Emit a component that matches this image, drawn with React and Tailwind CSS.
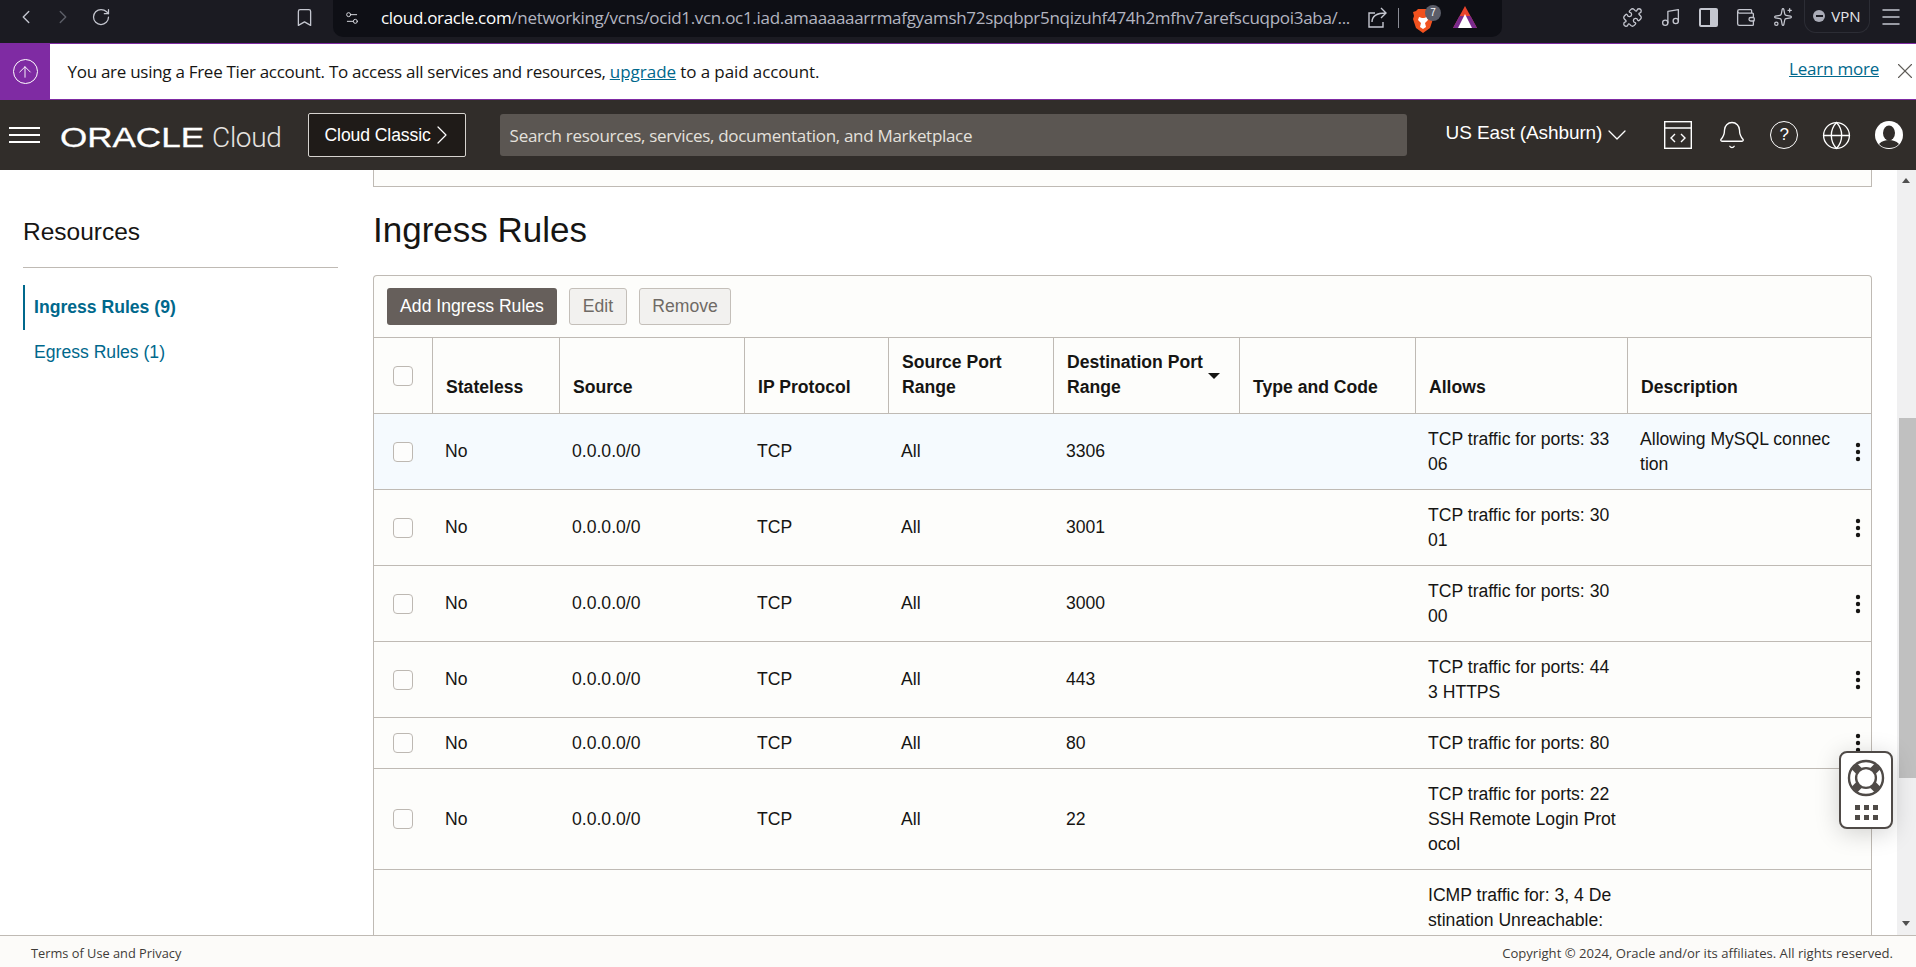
import React from "react";
import {
  ChevronLeft,
  ChevronRight,
  RotateCw,
  Bookmark,
  Settings2,
  Puzzle,
  Music,
  Wallet,
  Sparkles,
  Menu,
  ArrowUp,
  X,
  ChevronDown,
  Bell,
  Globe,
} from "lucide-react";

const ruleRows = [
  { port: "3306", allows: "TCP traffic for ports: 3306", desc: "Allowing MySQL connection", active: true },
  { port: "3001", allows: "TCP traffic for ports: 3001" },
  { port: "3000", allows: "TCP traffic for ports: 3000" },
  { port: "443", allows: "TCP traffic for ports: 443 HTTPS" },
  { port: "80", allows: "TCP traffic for ports: 80" },
  { port: "22", allows: "TCP traffic for ports: 22 SSH Remote Login Protocol" },
];

const headers = [
  ["Stateless"],
  ["Source"],
  ["IP Protocol"],
  ["Source Port", "Range"],
  ["Destination Port", "Range"],
  ["Type and Code"],
  ["Allows"],
  ["Description"],
];

function Checkbox() {
  return <div className="mx-auto h-5 w-5 rounded-[4px] border border-[#bdb8b2] bg-[#fdfdfc]" />;
}

function Kebab() {
  return (
    <svg width="6" height="20" viewBox="0 0 6 20" className="absolute right-[10px] top-1/2 -translate-y-1/2" fill="#161513">
      <circle cx="3" cy="3" r="2.2" />
      <circle cx="3" cy="10" r="2.2" />
      <circle cx="3" cy="17" r="2.2" />
    </svg>
  );
}

function Row({ row }) {
  const cell = "border-b border-[#bfbab4] pl-[13px] pr-[10px] py-[12.5px] align-middle break-all " + (row.active ? "bg-[#f5fafe]" : "");
  return (
    <tr>
      <td className={cell + " !px-0"}>
        <Checkbox />
      </td>
      <td className={cell}>No</td>
      <td className={cell}>0.0.0.0/0</td>
      <td className={cell}>TCP</td>
      <td className={cell}>All</td>
      <td className={cell}>{row.port}</td>
      <td className={cell}></td>
      <td className={cell}>{row.allows}</td>
      <td className={cell + " relative !pr-[38px]"}>
        {row.desc}
        <Kebab />
      </td>
    </tr>
  );
}

function Brave() {
  return (
    <div className="relative ml-[14px] h-[28px] w-[22px]">
      <svg width="20" height="24" viewBox="0 0 20 24" className="absolute left-0 top-[5px]">
        <path d="M5 0h10l2 2 3 1-1 4 1 3-3 9-7 5-7-5-3-9 1-3-1-4 3-1z" fill="#f1521f" />
        <path d="M6 8l3 1h2l3-1 1 3-3 3 1 4-3 2-3-2 1-4-3-3z" fill="#fff" />
      </svg>
      <div className="absolute left-[12px] top-[1px] flex h-[16px] w-[16px] items-center justify-center rounded-full bg-[#5b5d69] text-[10px] text-white">7</div>
    </div>
  );
}

function Bat() {
  return (
    <svg width="24" height="24" viewBox="0 0 24 24" className="ml-[18px]">
      <path d="M12 0 L0 22 H24 Z" fill="#e8432b" />
      <path d="M0 22 L6.5 10 H17.5 L24 22 Z" fill="#7a2a8c" />
      <path d="M12 8 L5 22 H19 Z" fill="#fff" />
    </svg>
  );
}

function ShareIcon() {
  return (
    <svg width="22" height="22" viewBox="0 0 22 22" fill="none" stroke="currentColor" strokeWidth="1.4" className="ml-[12px]">
      <path d="M8 6H2v14h14v-5" />
      <path d="M5 15c0-6 4-9 14-9M14 1l5 5-5 5" />
    </svg>
  );
}

function BrowserBar() {
  return (
    <div className="flex h-[43px] items-center bg-[#1b1b22] pb-[9px] pl-[15px] text-[#c4c6cf]">
      <ChevronLeft size={22} strokeWidth={1.5} />
      <ChevronRight size={22} strokeWidth={1.5} className="ml-[15px] text-[#5d5f68]" />
      <RotateCw size={20} strokeWidth={1.5} className="ml-[17px]" />
      <Bookmark size={21} strokeWidth={1.5} className="ml-[183px]" />
      <div className="ml-[18px] flex h-[37px] w-[1169px] items-center self-start rounded-b-[10px] bg-[#0e0f15] pb-[2px] pl-[11px]">
        <Settings2 size={16} strokeWidth={1.5} className="text-[#d5d6dc]" />
        <div className="ml-[21px] w-[974px] truncate font-['Open_Sans',sans-serif] text-[17px] tracking-[-0.3px] text-[#b3b5c0]">
          <span className="text-white">cloud.oracle.com</span>/networking/vcns/ocid1.vcn.oc1.iad.amaaaaaarrmafgyamsh72spqbpr5nqizuhf474h2mfhv7arefscuqpoi3aba/...
        </div>
        <ShareIcon />
        <div className="ml-[9px] h-[20px] w-px bg-[#8a8c95]" />
        <Brave />
        <Bat />
      </div>
      <Puzzle size={21} strokeWidth={1.5} className="ml-[120px]" />
      <Music size={21} strokeWidth={1.5} className="ml-[17px]" />
      <div className="ml-[18px] flex h-[19px] w-[19px] rounded-[2px] border-2 border-[#c4c6cf]">
        <div className="ml-auto w-[6px] bg-[#c4c6cf]" />
      </div>
      <Wallet size={21} strokeWidth={1.5} className="ml-[17px]" />
      <Sparkles size={20} strokeWidth={1.5} className="ml-[17px]" />
      <div className="ml-[11px] flex h-[33px] w-[66px] items-center justify-center gap-[6px] self-start rounded-b-[12px] border border-t-0 border-[#2c2d35] font-['Open_Sans',sans-serif] text-[15px] text-[#e5e6ea]">
        <div className="flex h-[12px] w-[12px] items-center justify-center rounded-full bg-[#a9abb6]">
          <div className="h-[2px] w-[7px] bg-[#1b1b22]" />
        </div>
        VPN
      </div>
      <Menu size={24} strokeWidth={1.5} className="ml-[9px]" />
    </div>
  );
}

function Banner() {
  return (
    <div className="flex h-[57px] border-y border-[#7f2ba3] bg-white font-['Open_Sans',sans-serif] text-[#161513]">
      <div className="flex w-[50px] items-center justify-center bg-[#7f2ba3] text-white">
        <div className="flex h-[25px] w-[25px] items-center justify-center rounded-full border border-white">
          <ArrowUp size={18} strokeWidth={1.25} />
        </div>
      </div>
      <div className="ml-[17.5px] flex items-center text-[17px] tracking-[-0.28px]">
        <span>
          You are using a Free Tier account. To access all services and resources, <a className="text-[#00688c] tracking-[0px] underline">upgrade</a> <span className="tracking-[-0.1px]">to a paid account.</span>
        </span>
      </div>
      <a className="ml-auto mr-[13px] mt-[12px] text-[17px] tracking-[-0.22px] text-[#00688c] underline">Learn more</a>
      <X size={26} strokeWidth={1} className="mr-[-2px] mt-[14px] text-[#5f5c58]" />
    </div>
  );
}

function CodePanel() {
  return (
    <svg width="28" height="28" viewBox="0 0 28 28" fill="none" stroke="#fff" strokeWidth="1.4">
      <rect x="0.7" y="0.7" width="26.6" height="26.6" />
      <path d="M1 7h26M11 13l-4 4 4 4M17 13l4 4-4 4" />
    </svg>
  );
}

function HelpIcon() {
  return (
    <div className="flex h-[28px] w-[28px] items-center justify-center rounded-full border-[1.4px] border-white font-['Liberation_Sans',sans-serif] text-[17px]">?</div>
  );
}

function UserIcon() {
  return (
    <svg width="28" height="28" viewBox="0 0 28 28">
      <circle cx="14" cy="14" r="14" fill="#fff" />
      <ellipse cx="14" cy="12" rx="6" ry="7.5" fill="#312d2a" />
      <path d="M4 23c3-3 6-4 10-4s7 1 10 4c-3 3-6 4-10 4s-7-1-10-4z" fill="#312d2a" />
    </svg>
  );
}

function TopHeader() {
  return (
    <div className="flex h-[70px] items-center bg-[#312d2a] text-white">
      <div className="ml-[9px] flex w-[31px] flex-col gap-[5px]">
        <div className="h-[2px] bg-white" />
        <div className="h-[2px] bg-white" />
        <div className="h-[2px] bg-white" />
      </div>
      <svg width="146" height="30" viewBox="0 0 146 30" className="ml-[20px] overflow-visible">
        <text x="0" y="27" fontSize="27" fontWeight="400" fill="#fff" stroke="#fff" strokeWidth="0.3" textLength="144" lengthAdjust="spacingAndGlyphs" fontFamily="Liberation Sans, sans-serif">
          ORACLE
        </text>
      </svg>
      <div className="ml-[6px] mt-[6px] font-['Roboto',sans-serif] text-[28px] font-light tracking-[-0.3px] text-[#e6e4e1]">Cloud</div>
      <div className="ml-[26px] flex h-[44px] w-[158px] items-center justify-center rounded-[2px] border border-[#d6d3cf] bg-[#1f1b18] text-[17.6px] tracking-[-0.1px]">
        Cloud Classic
        <ChevronRight size={32} strokeWidth={0.9} className="-ml-[5px] -mr-[9px]" />
      </div>
      <div className="ml-[34px] flex h-[42px] w-[907px] items-center rounded-[3px] bg-[#5b5652] pl-[10px] pt-[2px] font-['Open_Sans',sans-serif] text-[17px] tracking-[-0.3px] text-[#e4e1dd]">
        Search resources, services, documentation, and Marketplace
      </div>
      <div className="ml-[39px] -mt-[3px] text-[19px] tracking-[-0.1px]">US East (Ashburn)</div>
      <ChevronDown size={32} strokeWidth={0.95} className="-mx-[1px]" />
      <div className="ml-[32px]">
        <CodePanel />
      </div>
      <Bell size={30} strokeWidth={1.1} className="ml-[25px]" />
      <div className="ml-[23px]">
        <HelpIcon />
      </div>
      <Globe size={31} strokeWidth={1.05} className="ml-[23px]" />
      <div className="ml-[23px]">
        <UserIcon />
      </div>
    </div>
  );
}

function Sidebar() {
  return (
    <div className="w-[373px] shrink-0 pl-[23px] pr-[35px]">
      <div className="mt-[44px] text-[24.5px] leading-[36px]">Resources</div>
      <div className="mt-[17px] border-t border-[#bfbab4]" />
      <div className="mt-[17px] flex h-[45px] items-center border-l-2 border-[#00688c] pl-[9px] font-bold text-[#00688c]">Ingress Rules (9)</div>
      <div className="flex h-[45px] items-center pl-[11px] text-[#00688c]">Egress Rules (1)</div>
    </div>
  );
}

function RulesTable() {
  const widths = ["w-[58px]", "w-[127px]", "w-[185px]", "w-[144px]", "w-[165px]", "w-[186px]", "w-[176px]", "w-[212px]", "w-[244px]"];
  return (
    <table className="w-full table-fixed border-separate border-spacing-0 leading-[25px]">
      <colgroup>
        {widths.map((w) => (
          <col key={w} className={w} />
        ))}
      </colgroup>
      <thead>
        <tr>
          <th className="border-b border-[#bfbab4] align-middle">
            <Checkbox />
          </th>
          {headers.map((h) => (
            <th key={h[0]} className="relative h-[76px] border-b border-l border-[#bfbab4] pb-[13px] pl-[13px] pr-[11px] text-left align-bottom font-bold leading-[25px]">
              {h.map((line) => (
                <div key={line}>{line}</div>
              ))}
              {h[0] === "Destination Port" && <div className="absolute right-[19px] top-[35px] h-0 w-0 border-x-[6px] border-t-[6px] border-x-transparent border-t-[#161513]" />}
            </th>
          ))}
        </tr>
      </thead>
      <tbody>
        {ruleRows.map((r) => (
          <Row key={r.port} row={r} />
        ))}
        <tr>
          <td />
          <td colSpan={6} />
          <td className="h-[120px] break-all py-[12.5px] pl-[13px] pr-[10px] align-top">ICMP traffic for: 3, 4 Destination Unreachable:</td>
          <td />
        </tr>
      </tbody>
    </table>
  );
}

function Content() {
  return (
    <div className="min-w-0 flex-1 pr-[25px]">
      <div className="h-[17px] border-x border-b border-[#bfbab4] bg-[#fdfdfb]" />
      <h1 className="mb-[21px] mt-[19px] text-[35px] leading-[48px]">Ingress Rules</h1>
      <div className="rounded-t-[4px] border-x border-t border-[#bfbab4] bg-[#fdfdfb]">
        <div className="flex h-[62px] items-center gap-3 border-b border-[#bfbab4] pb-[1px] pl-[13px]">
          <div className="flex h-[37px] w-[170px] items-center justify-center rounded-[3px] bg-[#665f5b] text-white">Add Ingress Rules</div>
          <div className="flex h-[37px] w-[58px] items-center justify-center rounded-[3px] border border-[#c4bfb9] bg-[#f2f1ef] text-[#6f6a65]">Edit</div>
          <div className="flex h-[37px] w-[92px] items-center justify-center rounded-[3px] border border-[#c4bfb9] bg-[#f2f1ef] text-[#6f6a65]">Remove</div>
        </div>
        <RulesTable />
      </div>
    </div>
  );
}

function Scrollbar() {
  return (
    <div className="relative w-[19px] shrink-0 bg-[#f0f0f1]">
      <div className="absolute left-[5px] top-[8px] h-0 w-0 border-x-[4px] border-b-[5px] border-x-transparent border-b-[#505050]" />
      <div className="absolute left-[2px] right-0 top-[248px] h-[360px] bg-[#c0c0c0]" />
      <div className="absolute bottom-[9px] left-[5px] h-0 w-0 border-x-[4px] border-t-[5px] border-x-transparent border-t-[#505050]" />
    </div>
  );
}

function SupportWidget() {
  const spokes = ["M9.5 9.5L15 15", "M38.5 9.5L33 15", "M9.5 38.5L15 33", "M38.5 38.5L33 33"];
  return (
    <div className="absolute left-[1839px] top-[581px] flex h-[78px] w-[54px] flex-col items-center rounded-[8px] border-[2.5px] border-[#4f4a47] bg-white pt-[6px] shadow-[0_4px_24px_rgba(0,0,0,0.18)]">
      <svg width="38" height="38" viewBox="0 0 48 48" fill="none" stroke="#4f4a47">
        <circle cx="24" cy="24" r="21.5" strokeWidth="3" />
        <circle cx="24" cy="24" r="12.5" strokeWidth="3" />
        {spokes.map((d) => (
          <path key={d} d={d} strokeWidth="10" />
        ))}
      </svg>
      <div className="mt-[8px] grid grid-cols-3 gap-x-[4px] gap-y-[5px]">
        {[0, 1, 2, 3, 4, 5].map((i) => (
          <div key={i} className="h-[5px] w-[5px] bg-[#4f4a47]" />
        ))}
      </div>
    </div>
  );
}

export default function App() {
  return (
    <div className="flex h-screen flex-col overflow-hidden bg-white font-['Liberation_Sans',Arial,sans-serif] text-[17.6px] text-[#161513]">
      <BrowserBar />
      <Banner />
      <TopHeader />
      <div className="relative flex min-h-0 flex-1 overflow-hidden bg-white">
        <Sidebar />
        <Content />
        <Scrollbar />
        <SupportWidget />
      </div>
      <div className="flex h-[32px] shrink-0 items-center justify-between border-t border-[#bfbab4] bg-[#fcfbf9] pl-[31px] pr-[23px] pt-[5px] font-['Open_Sans',sans-serif] text-[#3f3b38]">
        <span className="text-[12.8px]">Terms of Use and Privacy</span>
        <span className="text-[13.1px]">Copyright © 2024, Oracle and/or its affiliates. All rights reserved.</span>
      </div>
    </div>
  );
}
